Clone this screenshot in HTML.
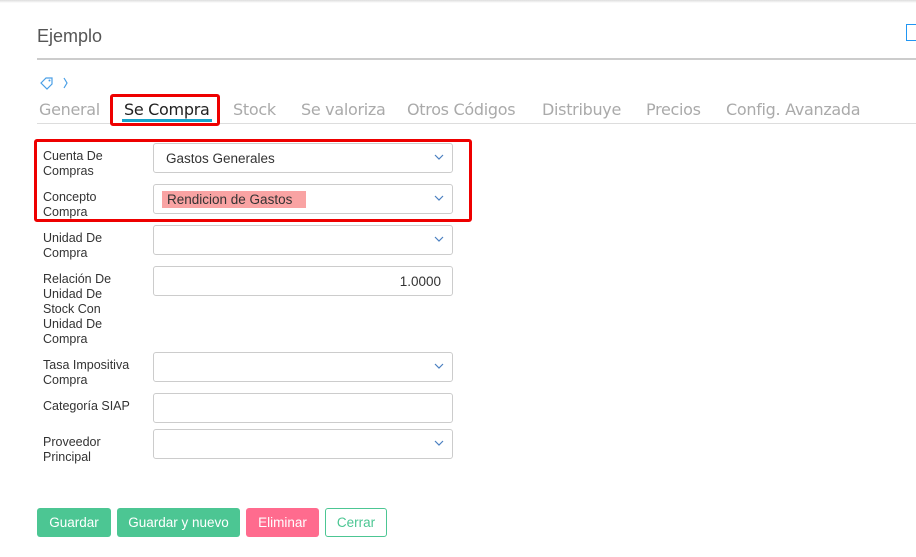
<!DOCTYPE html><html><head><style>
body{margin:0;width:916px;height:557px;background:#fff;position:relative;overflow:hidden;font-family:"Liberation Sans",sans-serif}
.a{position:absolute}
.top{left:0;top:0;width:916px;height:3px;background:linear-gradient(#ddd,#fff)}
.title{left:37px;top:26px;font-size:18px;color:#555}
.hl{left:37px;top:58px;width:879px;height:2px;background:#ccc}
.tab{top:100px;font-size:16px;color:#aaa;font-family:"DejaVu Sans","Liberation Sans",sans-serif;letter-spacing:-0.3px}
.lbl{left:43px;font-size:12.5px;color:#333;line-height:15px}
.inp{left:153px;width:298px;height:28px;border:1px solid #ccc;border-radius:3px;background:#fff}
.chev{position:absolute;right:8px;top:9px;width:10px;height:8px}
.btn{top:508px;height:29px;border-radius:3px;color:#fff;font-size:13.5px;line-height:29px;text-align:center}
</style></head><body>
<div class="a top"></div>
<div class="a title">Ejemplo</div>
<div class="a" style="left:906px;top:24px;width:12px;height:17px;border:1px solid #2196f3;box-sizing:border-box"></div>
<div class="a hl"></div>
<svg class="a" style="left:39px;top:76px" width="32" height="14"><path d="M2 7 L7 2 H13 V8 L8 13 Z" fill="none" stroke="#4a9fe6" stroke-width="1.2"/><circle cx="10.5" cy="4.5" r="1" fill="#4a9fe6"/><path d="M25 2 L28 7 L25 12" fill="none" stroke="#4a9fe6" stroke-width="1.2"/></svg>
<div class="a tab" style="left:39px">General</div>
<div class="a tab" style="left:124px;color:#222">Se Compra</div>
<div class="a tab" style="left:233px">Stock</div>
<div class="a tab" style="left:301px">Se valoriza</div>
<div class="a tab" style="left:407px">Otros Códigos</div>
<div class="a tab" style="left:542px">Distribuye</div>
<div class="a tab" style="left:646px">Precios</div>
<div class="a tab" style="left:726px">Config. Avanzada</div>
<div class="a" style="left:37px;top:123px;width:879px;height:1px;background:#ddd"></div>
<div class="a" style="left:122px;top:119px;width:90px;height:3px;background:#17a2c8"></div>
<div class="a" style="left:110px;top:94px;width:110px;height:32px;border:3px solid #e00;box-sizing:border-box;border-radius:3px"></div>

<div class="a lbl" style="top:149px">Cuenta De<br>Compras</div>
<div class="a inp" style="top:143px"><span class="a" style="left:12px;top:7px;font-size:13.5px;color:#333">Gastos Generales</span><svg class="chev"><path d="M1 2 L5 6 L9 2" fill="none" stroke="#4a7fc0" stroke-width="1.2"/></svg></div>
<div class="a lbl" style="top:190px">Concepto<br>Compra</div>
<div class="a inp" style="top:184px"><span class="a" style="left:8px;top:6px;font-size:13.5px;color:#333;background:#f9a3a3;padding:1px 14px 1px 5px">Rendicion de Gastos</span><svg class="chev"><path d="M1 2 L5 6 L9 2" fill="none" stroke="#4a7fc0" stroke-width="1.2"/></svg></div>
<div class="a" style="left:34px;top:139px;width:438px;height:83px;border:3px solid #e00;box-sizing:border-box;border-radius:3px"></div>
<div class="a lbl" style="top:231px">Unidad De<br>Compra</div>
<div class="a inp" style="top:225px"><svg class="chev"><path d="M1 2 L5 6 L9 2" fill="none" stroke="#4a7fc0" stroke-width="1.2"/></svg></div>
<div class="a lbl" style="top:272px">Relación De<br>Unidad De<br>Stock Con<br>Unidad De<br>Compra</div>
<div class="a inp" style="top:266px"><span class="a" style="right:11px;top:7px;font-size:13.5px;color:#333">1.0000</span></div>
<div class="a lbl" style="top:358px">Tasa Impositiva<br>Compra</div>
<div class="a inp" style="top:352px"><svg class="chev"><path d="M1 2 L5 6 L9 2" fill="none" stroke="#4a7fc0" stroke-width="1.2"/></svg></div>
<div class="a lbl" style="top:399px">Categoría SIAP</div>
<div class="a inp" style="top:393px"></div>
<div class="a lbl" style="top:435px">Proveedor<br>Principal</div>
<div class="a inp" style="top:429px"><svg class="chev"><path d="M1 2 L5 6 L9 2" fill="none" stroke="#4a7fc0" stroke-width="1.2"/></svg></div>

<div class="a btn" style="left:37px;width:74px;background:#4cc693">Guardar</div>
<div class="a btn" style="left:117px;width:123px;background:#4cc693">Guardar y nuevo</div>
<div class="a btn" style="left:246px;width:73px;background:#ff6b8e">Eliminar</div>
<div class="a btn" style="left:325px;width:60px;height:27px;line-height:27px;border:1px solid #4cc693;color:#4cc693;background:#fff">Cerrar</div>
</body></html>
